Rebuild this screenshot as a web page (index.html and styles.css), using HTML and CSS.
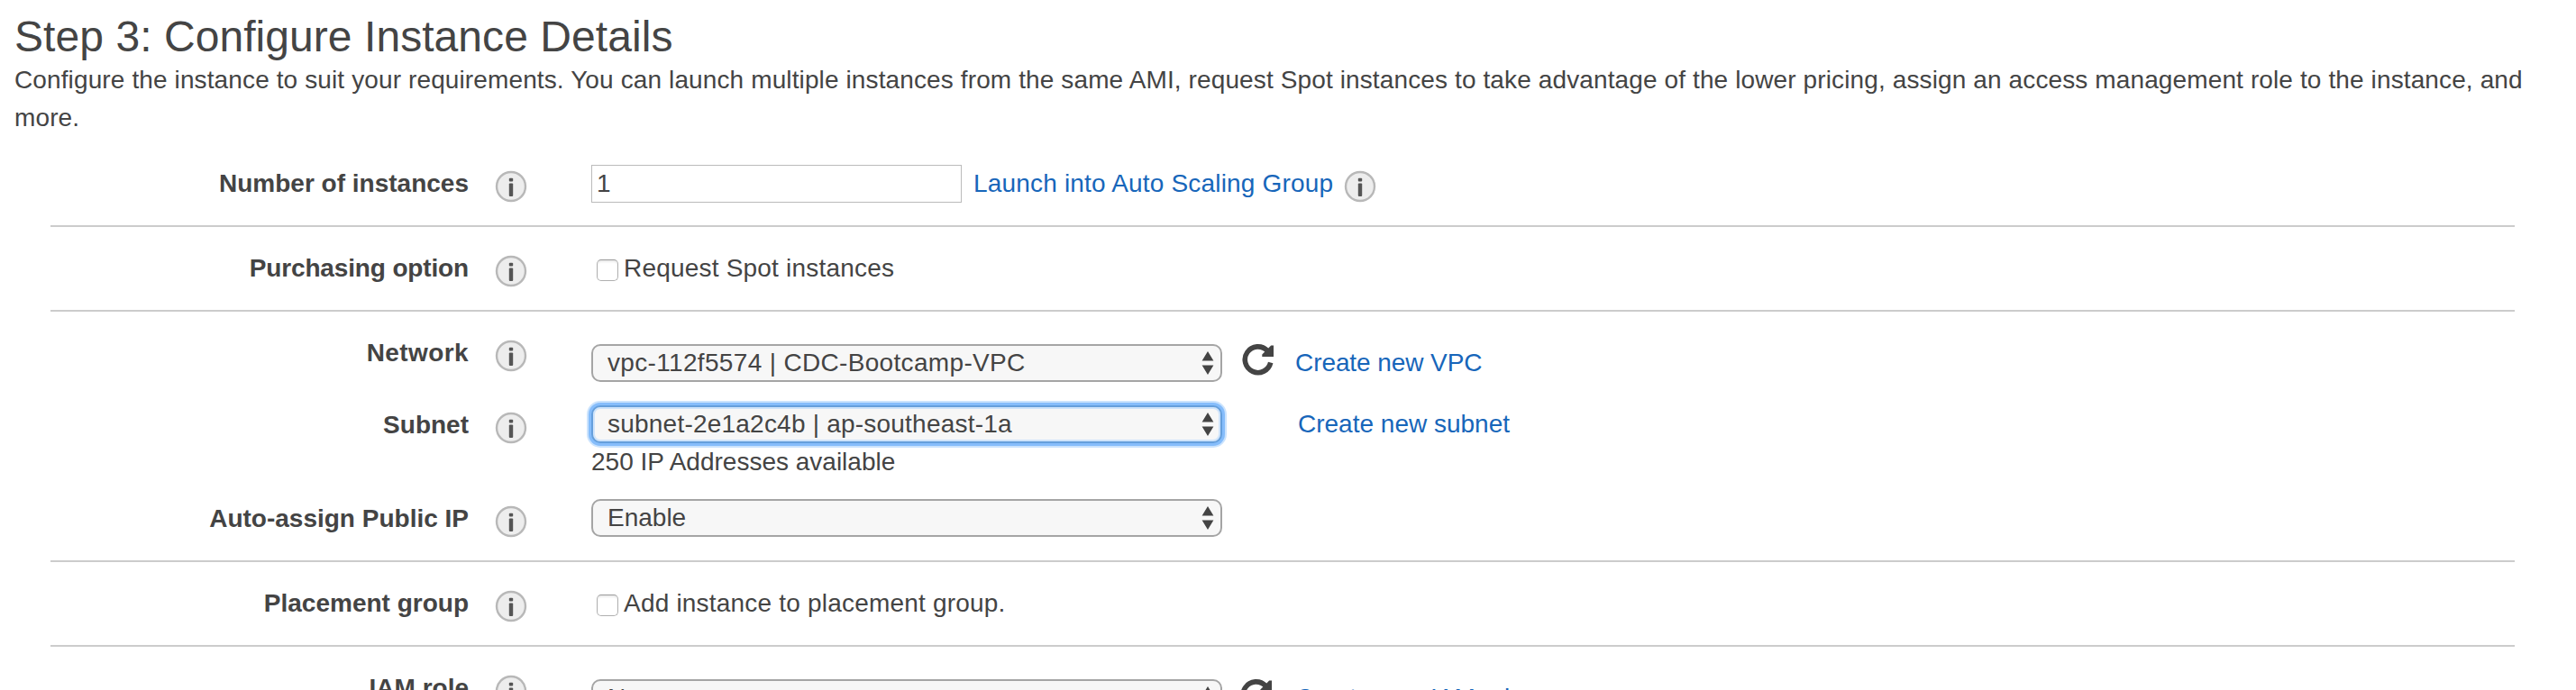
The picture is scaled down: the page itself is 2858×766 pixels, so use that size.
FILE: index.html
```html
<!DOCTYPE html>
<html lang="en">
<head>
<meta charset="utf-8">
<title>Step 3: Configure Instance Details</title>
<link rel="stylesheet" href="styles.css">
</head>
<body>
<svg class="defs" width="0" height="0">
  <symbol id="info" viewBox="0 0 36 36">
    <circle cx="18" cy="18" r="16" fill="#ededed" stroke="#b8b8b8" stroke-width="2.4"/>
    <rect x="15.8" y="8.8" width="4.4" height="3.6" rx="1" fill="#555"/>
    <rect x="15.8" y="14.4" width="4.4" height="14.6" rx="1" fill="#555"/>
  </symbol>
  <symbol id="refresh" viewBox="0 0 36 36">
    <path d="M31.7 21.5A14.4 14.4 0 1 1 28 8.2" fill="none" stroke="#444" stroke-width="5.6"/>
    <path d="M35 2.5V15H22.3V12.6L32.2 2.5Z" fill="#444"/>
  </symbol>
  <symbol id="arrows" viewBox="0 0 14 28">
    <path d="M7 1L13.4 11.5H.6ZM7 27L.6 16.5H13.4Z" fill="#444"/>
  </symbol>
</svg>
<main class="page">
  <h1 class="title">Step 3: Configure Instance Details</h1>
  <p class="intro">Configure the instance to suit your requirements. You can launch multiple instances from the same AMI, request Spot instances to take advantage of the lower pricing, assign an access management role to the instance, and more.</p>
  <form class="form">
    <section class="group">
      <div class="row">
        <label class="label">Number of instances</label>
        <svg class="info"><use href="#info"/></svg>
        <div class="control"><div class="input">1</div><a class="link link-scaling">Launch into Auto Scaling Group</a><svg class="info info-inline"><use href="#info"/></svg></div>
      </div>
    </section>
    <section class="group">
      <div class="row">
        <label class="label label-tight">Purchasing option</label>
        <svg class="info"><use href="#info"/></svg>
        <div class="control"><span class="checkbox"></span><span class="check-text">Request Spot instances</span></div>
      </div>
    </section>
    <section class="group">
      <div class="row row-network">
        <label class="label label-wide">Network</label>
        <svg class="info"><use href="#info"/></svg>
        <div class="control control-low"><div class="select select-vpc"><span>vpc-112f5574 | CDC-Bootcamp-VPC</span><svg class="arrows"><use href="#arrows"/></svg></div><svg class="refresh"><use href="#refresh"/></svg><a class="link link-create">Create new VPC</a></div>
      </div>
      <div class="row row-subnet">
        <label class="label">Subnet</label>
        <svg class="info"><use href="#info"/></svg>
        <div class="stack">
          <div class="control"><div class="select select-focus"><span>subnet-2e1a2c4b | ap-southeast-1a</span><svg class="arrows"><use href="#arrows"/></svg></div><a class="link link-subnet">Create new subnet</a></div>
          <div class="note">250 IP Addresses available</div>
        </div>
      </div>
      <div class="row">
        <label class="label">Auto-assign Public IP</label>
        <svg class="info"><use href="#info"/></svg>
        <div class="control"><div class="select"><span>Enable</span><svg class="arrows"><use href="#arrows"/></svg></div></div>
      </div>
    </section>
    <section class="group">
      <div class="row">
        <label class="label">Placement group</label>
        <svg class="info"><use href="#info"/></svg>
        <div class="control"><span class="checkbox"></span><span class="check-text">Add instance to placement group.</span></div>
      </div>
    </section>
    <section class="group">
      <div class="row">
        <label class="label">IAM role</label>
        <svg class="info"><use href="#info"/></svg>
        <div class="control control-low"><div class="select"><span>None</span><svg class="arrows"><use href="#arrows"/></svg></div><svg class="refresh refresh-iam"><use href="#refresh"/></svg><a class="link link-create">Create new IAM role</a></div>
      </div>
    </section>
  </form>
</main>
</body>
</html>
```
FILE: styles.css
```css
* { box-sizing: border-box; }
html, body { margin: 0; height: 766px; overflow: hidden; background: #fff; }
body {
  font-family: "Liberation Sans", Arial, sans-serif;
  font-size: 28px;
  line-height: 42px;
  color: #444;
}
svg { display: block; flex: none; }
.defs { display: none; }
.page { height: 766px; overflow: hidden; padding: 14px 48px 0 16px; }
.title { margin: 0; font-size: 48px; line-height: 54px; font-weight: 400; letter-spacing: 0.06px; white-space: nowrap; }
.intro { margin: 0; letter-spacing: 0.12px; }
.form { margin: 6px 4px 0 40px; width: 2734px; }
.group { border-bottom: 2px solid #ccc; }
.row { display: flex; align-items: flex-start; height: 92px; padding-top: 24px; white-space: nowrap; }
.row-network { height: 80px; }
.row-subnet { height: 104px; }
.label { width: 464px; text-align: right; font-weight: 700; line-height: 44px; }
.label-tight { letter-spacing: -0.15px; }
.label-wide { letter-spacing: 0.4px; }
.info { width: 36px; height: 36px; margin: 7px 0 0 29px; }
.control { display: flex; align-items: flex-start; margin-left: 71px; }
.control-low { margin-top: 12px; }
.stack { display: flex; flex-direction: column; }
.input { width: 411px; height: 42px; margin-top: 1px; padding: 0 5px; border: 1px solid #bbb; line-height: 40px; }
.link { color: #1766ba; }
.link-scaling { margin-left: 13px; line-height: 44px; letter-spacing: 0.18px; }
.info-inline { margin-left: 12px; }
.checkbox {
  width: 24px;
  height: 24px;
  margin: 12px 6px 0 6px;
  border: 1px solid #b0b0b0;
  border-top-color: #999;
  border-radius: 5px;
  box-shadow: inset 0 2px 2px #ececec;
}
.check-text { line-height: 44px; letter-spacing: 0.2px; }
.select {
  display: flex;
  justify-content: space-between;
  width: 700px;
  height: 42px;
  padding: 0 7px 0 16px;
  border: 2px solid #a5a5a5;
  border-radius: 10px;
  background: #f7f7f7;
  line-height: 37px;
}
.select-vpc { letter-spacing: 0.33px; }
.select-focus {
  border-color: #659fdc;
  box-shadow: 0 0 0 3px #86bdfb, 0 0 0 5px #cbe3fd, inset 0 0 0 2px #cfe4fb;
  letter-spacing: 0.22px;
}
.arrows { width: 14px; height: 28px; margin-top: 5px; }
.refresh { width: 36px; height: 36px; margin: -1px 0 0 22px; }
.refresh-iam { margin-left: 20px; margin-right: 2px; }
.link-create { margin-left: 23px; letter-spacing: -0.08px; }
.link-subnet { margin-left: 84px; }
.link-create, .link-subnet { line-height: 41px; }
.note { margin-left: 71px; }
```
